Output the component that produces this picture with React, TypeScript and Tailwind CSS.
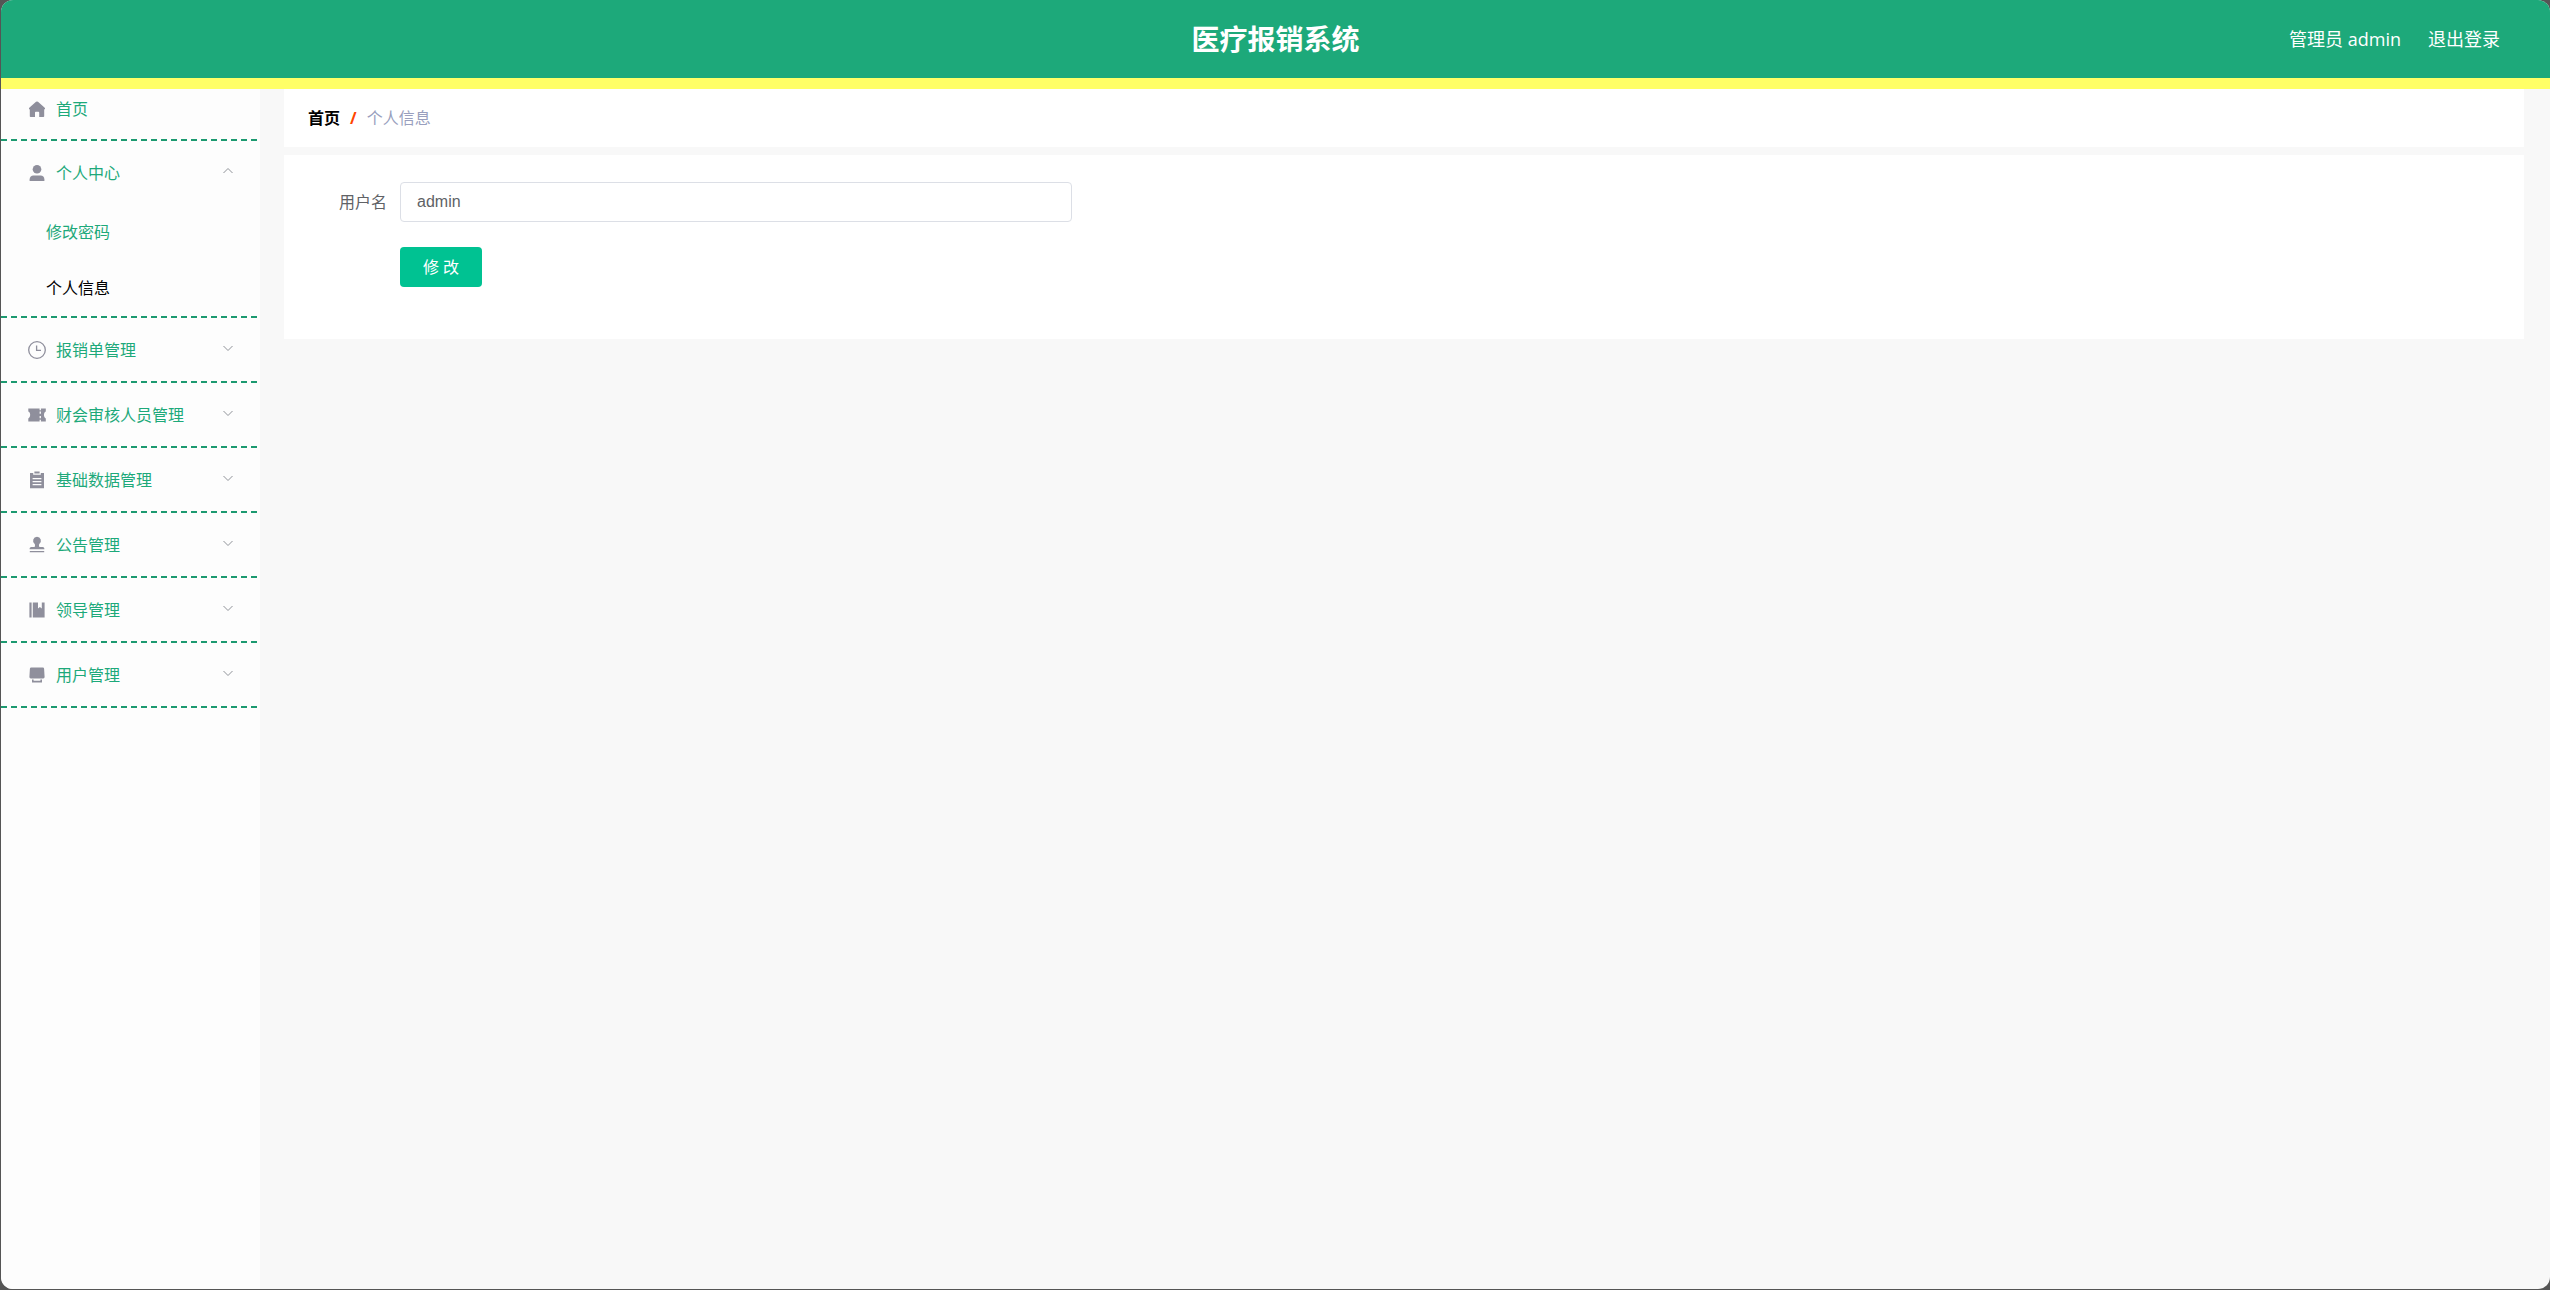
import type { ReactNode } from "react"

type MenuItem = {
  label: string
  icon: ReactNode
  children?: string[]
}

const iconClass = "size-[18px] shrink-0 text-[#8f8f9c]"

function HomeIcon() {
  return (
    <svg viewBox="0 0 18 18" fill="currentColor" className={iconClass} aria-hidden="true">
      <path d="M9 1.4Q9.6 1.4 10 1.8L17 8Q17.4 9.2 16.2 9.4V16.2Q16.2 17 15.4 17H11.2V12.6Q11.2 11.8 10.4 11.8H7.8Q7 11.8 7 12.6V17H2.6Q1.8 17 1.8 16.2V9.4Q.6 9.2 1 8L8 1.8Q8.4 1.4 9 1.4Z" />
    </svg>
  )
}

function UserIcon() {
  return (
    <svg viewBox="0 0 18 18" fill="currentColor" className={iconClass} aria-hidden="true">
      <circle cx="9" cy="5.2" r="4.3" />
      <path d="M1.6 17V15.4C1.6 12.8 3.4 11.4 5.4 11.4H12.6C14.8 11.4 16.4 12.8 16.4 15.4V17Z" />
    </svg>
  )
}

function ClockIcon() {
  return (
    <svg viewBox="0 0 18 18" fill="none" stroke="currentColor" strokeWidth="1.3" className={iconClass} aria-hidden="true">
      <circle cx="9" cy="9" r="8.3" />
      <path d="M8.6 4.5V9.4H13" />
    </svg>
  )
}

function TicketIcon() {
  return (
    <svg viewBox="0 0 18 18" fill="currentColor" fillRule="evenodd" className={iconClass} aria-hidden="true">
      <path d="M.3 2.5H11.6V4.3H12.9V2.5H17.8V5.6C15.4 6.2 15.4 11.6 17.8 12.4V15.5H12.9V13.7H11.6V15.5H.3V12.4C2.8 11.6 2.8 6.2.3 5.6ZM11.6 5.6V7.8H12.9V5.6ZM11.6 10V12.2H12.9V10Z" />
    </svg>
  )
}

function OrderIcon() {
  return (
    <svg viewBox="0 0 18 18" fill="currentColor" fillRule="evenodd" className={iconClass} aria-hidden="true">
      <path d="M6.4.6H11.6V2.6H6.4ZM2 2H5.2V3.8H12.8V2H16V17.2H2ZM4.6 7V8.2H13.4V7ZM4.6 10V11.2H13.4V10ZM4.6 13V14.2H13.4V13Z" />
    </svg>
  )
}

function StampIcon() {
  return (
    <svg viewBox="0 0 18 18" fill="currentColor" className={iconClass} aria-hidden="true">
      <path d="M9 .8A4 4 0 0 1 11.3 8C10.8 8.6 10.9 10.6 11.5 11H14.6C15.8 11 16.4 11.9 16.4 13.3H1.6C1.6 11.9 2.2 11 3.4 11H6.5C7.1 10.6 7.2 8.6 6.7 8A4 4 0 0 1 9 .8ZM1.8 15H16.2V16.3H1.8Z" />
    </svg>
  )
}

function NotebookIcon() {
  return (
    <svg viewBox="0 0 18 18" fill="currentColor" className={iconClass} aria-hidden="true">
      <path d="M1.4 1.6H3.6V16.6H1.4ZM4.8 1.6H10V7.4L11.9 6 13.8 7.4V1.6H16.6V16.6H4.8Z" />
    </svg>
  )
}

function PlatformIcon() {
  return (
    <svg viewBox="0 0 18 18" fill="currentColor" className={iconClass} aria-hidden="true">
      <path d="M3.2 1.6H14.8Q16 1.6 16.1 2.8L16.6 11Q16.6 12.4 15.2 12.4H2.8Q1.4 12.4 1.4 11L1.9 2.8Q2 1.6 3.2 1.6ZM4 13.6H5.6V14.8H12.4V13.6H14V16.6H4Z" />
    </svg>
  )
}

function Chevron({ open }: { open: boolean }) {
  return (
    <svg
      viewBox="0 0 12 12"
      fill="none"
      stroke="currentColor"
      className="mb-1 ml-auto size-3 text-[#909399]"
      aria-hidden="true"
    >
      <path d={open ? "M1.5 8 6 3.5 10.5 8" : "M1.5 4 6 8.5 10.5 4"} />
    </svg>
  )
}

const menu: MenuItem[] = [
  { label: "个人中心", icon: <UserIcon />, children: ["修改密码", "个人信息"] },
  { label: "报销单管理", icon: <ClockIcon /> },
  { label: "财会审核人员管理", icon: <TicketIcon /> },
  { label: "基础数据管理", icon: <OrderIcon /> },
  { label: "公告管理", icon: <StampIcon /> },
  { label: "领导管理", icon: <NotebookIcon /> },
  { label: "用户管理", icon: <PlatformIcon /> },
]

const current = "个人信息"

function Header() {
  return (
    <header className="grid h-[89px] grid-cols-[1fr_auto_1fr] items-center border-b-[11px] border-[#ffff66] bg-[#1da97a] text-white">
      <h1 className="col-start-2 text-[28px] font-bold">医疗报销系统</h1>
      <div className="flex justify-end gap-[27px] pr-[50px] text-lg">
        <span>管理员 admin</span>
        <a href="#logout">退出登录</a>
      </div>
    </header>
  )
}

function Sidebar() {
  return (
    <nav className="w-[259px] shrink-0 bg-[#fdfdfd] pr-[3px] text-base text-[#1da97a]">
      <ul>
        <li className="border-b-2 border-dashed border-[#1c9a70]">
          <a href="#home" className="flex h-[50px] items-center gap-[10px] pb-[10px] pl-[27px]">
            <HomeIcon />
            首页
          </a>
        </li>
        {menu.map((item) => (
          <li key={item.label} className="border-b-2 border-dashed border-[#1c9a70]">
            <button
              type="button"
              aria-expanded={Boolean(item.children)}
              className="flex h-[63px] w-full items-center gap-[10px] pr-[23px] pl-[27px]"
            >
              {item.icon}
              {item.label}
              <Chevron open={Boolean(item.children)} />
            </button>
            {item.children && (
              <ul>
                {item.children.map((child) => (
                  <li key={child}>
                    <a
                      href={`#${child}`}
                      aria-current={child === current ? "page" : undefined}
                      className="flex h-14 items-center pl-[45px] aria-[current=page]:text-black"
                    >
                      {child}
                    </a>
                  </li>
                ))}
              </ul>
            )}
          </li>
        ))}
      </ul>
    </nav>
  )
}

export default function App() {
  return (
    <div className="flex min-h-screen flex-col bg-[#555] pb-px pl-px font-['Open_Sans','Noto_Sans_CJK_SC',sans-serif]">
      <div className="flex flex-1 flex-col overflow-hidden rounded-xl bg-[#f8f8f8]">
        <Header />
        <div className="flex flex-1">
          <Sidebar />
          <main className="flex min-w-0 flex-1 flex-col gap-2 pr-[26px] pl-6">
            <nav aria-label="breadcrumb" className="bg-white px-6 pt-[17px] pb-[17px]">
              <ol className="flex items-center gap-[10px] text-base leading-6">
                <li>
                  <a href="#home" className="font-bold text-black">首页</a>
                </li>
                <li aria-hidden="true" className="font-bold text-[#ff4500]">/</li>
                <li className="text-[#999fbe]">{current}</li>
              </ol>
            </nav>
            <form className="bg-white pt-[27px] pr-6 pb-[52px] pl-[55px]">
              <div className="flex items-center text-[#606266]">
                <label htmlFor="username" className="w-[61px] shrink-0 text-base">用户名</label>
                <input
                  id="username"
                  type="text"
                  defaultValue="admin"
                  className="h-10 max-w-[672px] min-w-0 flex-1 rounded border border-[#dcdfe6] bg-white px-4 font-['Liberation_Sans',sans-serif] text-base outline-none"
                />
              </div>
              <button
                type="button"
                className="mt-[25px] ml-[61px] h-10 w-[82px] rounded bg-[#00c292] text-base text-white"
              >
                修 改
              </button>
            </form>
          </main>
        </div>
      </div>
    </div>
  )
}
